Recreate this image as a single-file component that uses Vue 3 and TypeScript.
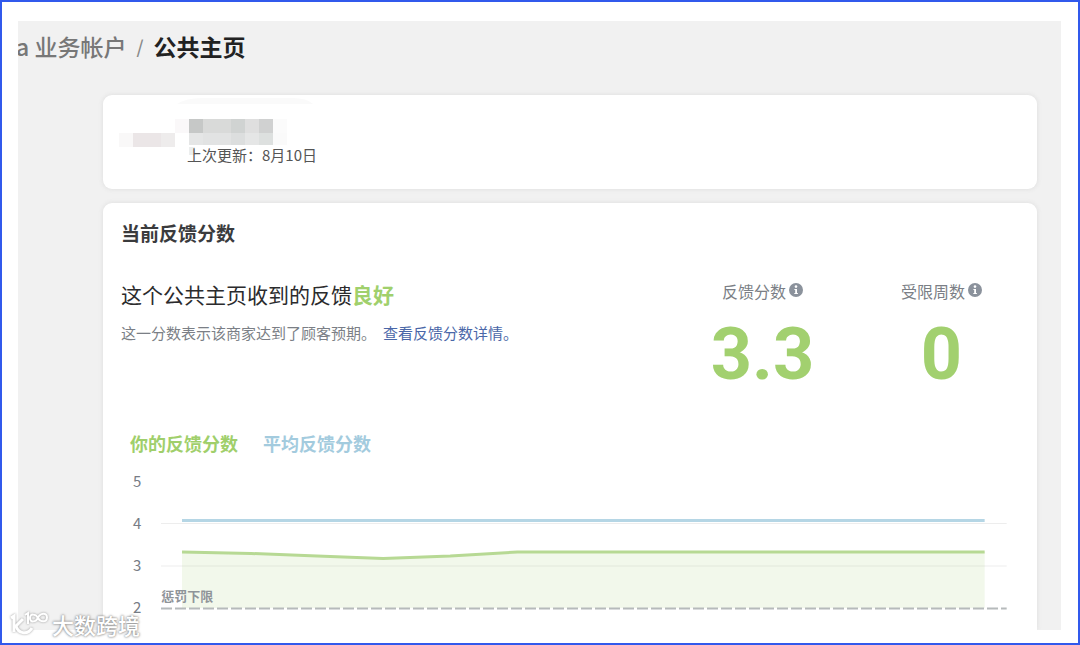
<script setup lang="ts">
interface Metric {
  id: string
  label: string
  value: string
}
interface Tile {
  x: number
  y: number
  w: number
  h: number
  fill: string
}

const metrics: Metric[] = [
  { id: 'score', label: '反馈分数', value: '3.3' },
  { id: 'weeks', label: '受限周数', value: '0' },
]

const axis: number[] = [5, 4, 3, 2]

const tiles: Tile[] = [
  { x: 0, y: 38, w: 14, h: 14, fill: '#f9f8f8' },
  { x: 14, y: 38, w: 28, h: 14, fill: '#ebe6e7' },
  { x: 42, y: 38, w: 14, h: 14, fill: '#eeecec' },
  { x: 56, y: 24, w: 14, h: 14, fill: '#faf8f9' },
  { x: 70, y: 24, w: 14, h: 14, fill: '#c6c8c7' },
  { x: 84, y: 24, w: 28, h: 14, fill: '#d9dad9' },
  { x: 112, y: 24, w: 14, h: 14, fill: '#d0d3d2' },
  { x: 126, y: 24, w: 14, h: 14, fill: '#dfdfdf' },
  { x: 140, y: 24, w: 14, h: 14, fill: '#d0d1d1' },
  { x: 154, y: 24, w: 14, h: 14, fill: '#fbfbfb' },
  { x: 70, y: 38, w: 14, h: 12, fill: '#e5e6e6' },
  { x: 84, y: 38, w: 28, h: 12, fill: '#e2e3e3' },
  { x: 112, y: 38, w: 14, h: 12, fill: '#dcdede' },
  { x: 126, y: 38, w: 14, h: 12, fill: '#e5e6e6' },
  { x: 140, y: 38, w: 14, h: 12, fill: '#dde0df' },
  { x: 154, y: 38, w: 14, h: 12, fill: '#fafafa' },
  { x: 70, y: 52, w: 6, h: 8, fill: '#eceeee' },
]
</script>

<template>
  <div class="frame">
    <main class="page">
      <nav class="crumbs">
        <a href="#" class="crumb">a 业务帐户</a>
        <span class="slash">/</span>
        <span class="current">公共主页</span>
      </nav>

      <section class="card profile">
        <svg class="mosaic" width="194" height="62" viewBox="0 0 194 62" aria-hidden="true">
          <path d="M58 9 Q66 3 84 3 H174 Q188 3 194 9 Z" fill="#fafafa" />
          <rect v-for="(t, i) in tiles" :key="i" :x="t.x" :y="t.y" :width="t.w" :height="t.h" :fill="t.fill" />
        </svg>
        <p class="updated">上次更新：8月10日</p>
      </section>

      <section class="card feedback">
        <h2 class="title">当前反馈分数</h2>
        <div class="summary">
          <div class="verdict">
            <p class="headline">这个公共主页收到的反馈<strong>良好</strong></p>
            <p class="note">
              <span>这一分数表示该商家达到了顾客预期。</span>
              <a href="#">查看反馈分数详情。</a>
            </p>
          </div>
          <div v-for="m in metrics" :key="m.id" class="metric">
            <div class="metric-label">
              <span>{{ m.label }}</span>
              <button type="button" class="info" :aria-label="m.label">
                <svg width="14" height="14" viewBox="0 0 14 14">
                  <circle cx="7" cy="7" r="7" fill="#8b929c" />
                  <circle cx="7" cy="3.6" r="1.3" fill="#fff" />
                  <path d="M5.4 6H8V10H8.9V11H5.3V10H6.2V7H5.4Z" fill="#fff" />
                </svg>
              </button>
            </div>
            <div class="metric-value">{{ m.value }}</div>
          </div>
        </div>

        <div class="legend">
          <span class="mine">你的反馈分数</span>
          <span class="average">平均反馈分数</span>
        </div>
        <div class="chart">
          <div class="axis">
            <span v-for="n in axis" :key="n">{{ n }}</span>
          </div>
          <div class="plot">
            <svg class="lines" viewBox="0 0 845 150" preserveAspectRatio="none">
              <path d="M0 63.5H845M0 106H845" class="grid" />
              <path
                d="M21 92L90 93.5L156 96L222 98.5L289 96L356 92H823V148H21Z"
                fill="#8bc34a"
                fill-opacity="0.11"
              />
              <path d="M0 148.5H845" class="limit" />
              <path d="M21 60.5H823" class="line blue" />
              <path d="M21 92L90 93.5L156 96L222 98.5L289 96L356 92H823" class="line green" />
            </svg>
            <span class="limit-label">惩罚下限</span>
          </div>
        </div>
      </section>
    </main>

    <div class="watermark">
      <svg width="40" height="28" viewBox="0 0 40 28" fill="none" stroke="#fff" aria-hidden="true">
        <path d="M2 8L5 6V22" stroke-width="3" />
        <path d="M14 9L7 16C9 23 18 26 23 18" stroke-width="3" />
        <path d="M16 5L19 3V14" stroke-width="2" />
        <path
          d="M29 8C27 4 21 3 21 8C21 13 27 12 29 8C31 3 38 2 38 7.500C38 13 31 12 29 8Z"
          stroke-width="2"
        />
      </svg>
      <span>大数跨境</span>
    </div>
  </div>
</template>

<style>
body {
  margin: 0;
}
</style>

<style scoped>
.frame {
  position: relative;
  box-sizing: border-box;
  min-height: 100vh;
  display: flex;
  flex-direction: column;
  padding: 19px 17px 13px 16px;
  border: 2px solid #3159ec;
  background: #fff;
  font-family: 'Noto Sans CJK SC', sans-serif;
}
p,
h2 {
  margin: 0;
}
a {
  text-decoration: none;
}
.page {
  flex: 1;
  display: flex;
  flex-direction: column;
  gap: 14px;
  padding: 8px 24px 0 85px;
  overflow: hidden;
  background: #f1f1f1;
}
.crumbs {
  display: flex;
  align-items: center;
  margin: 0 0 18px -87px;
  font-size: 23px;
  line-height: 34px;
  font-weight: 500;
}
.crumb {
  color: #777;
}
.slash {
  margin: 0 10px;
  font-size: 18px;
  color: #888;
}
.current {
  font-weight: 700;
  color: #222;
}
.card {
  border-radius: 9px;
  background: #fff;
  box-shadow: 0 0 5px #dcdcdc;
}
.profile {
  position: relative;
  padding: 49px 18px 23px 84px;
}
.mosaic {
  position: absolute;
  top: 0;
  left: 16px;
}
.updated {
  position: relative;
  font-size: 15px;
  line-height: 22px;
  color: #555;
}
.feedback {
  flex: 1;
  padding: 18px 6px 0 18px;
  border-radius: 9px 9px 0 0;
}
.title {
  font-size: 19px;
  line-height: 24px;
  font-weight: 700;
  color: #3a3b3d;
}
.summary {
  display: grid;
  grid-template-columns: 1fr 179px 179px;
  margin-top: 34px;
}
.headline {
  margin-top: 1px;
  font-size: 21px;
  line-height: 28px;
  color: #2b2b2d;
}
.headline strong {
  color: #a0d06c;
}
.note {
  display: flex;
  gap: 7px;
  margin-top: 15px;
  font-size: 15px;
  line-height: 20px;
  color: #7b7f86;
}
.note a {
  color: #4a67a8;
}
.metric {
  text-align: center;
}
.metric-label {
  display: flex;
  justify-content: center;
  gap: 3px;
  font-size: 16px;
  line-height: 24px;
  color: #7b7f86;
}
.info {
  height: 22px;
  padding: 0;
  border: 0;
  background: none;
  line-height: 0;
}
.metric-value {
  margin-top: 16px;
  font-family: Roboto, sans-serif;
  font-size: 72px;
  line-height: 72px;
  font-weight: 700;
  color: #a2d06f;
}
.legend {
  display: flex;
  gap: 25px;
  margin: 40px 0 5px 9px;
  font-size: 18px;
  line-height: 24px;
  font-weight: 700;
}
.mine {
  color: #a0cf6b;
}
.average {
  color: #a3cbde;
}
.chart {
  display: flex;
  gap: 20px;
  padding: 0 24px 0 12px;
}
.axis {
  display: flex;
  flex-direction: column;
  font-size: 15px;
  line-height: 42px;
  color: #777c85;
}
.plot {
  position: relative;
  flex: 1;
}
.lines {
  display: block;
  width: 100%;
  height: 150px;
}
.lines path {
  vector-effect: non-scaling-stroke;
}
.grid {
  stroke: #ededed;
  stroke-width: 1;
}
.limit {
  stroke: #b6babb;
  stroke-width: 2;
  stroke-dasharray: 11 3;
}
.line {
  fill: none;
  stroke-width: 3;
}
.blue {
  stroke: #b5d6e5;
}
.green {
  stroke: #b7d994;
}
.limit-label {
  position: absolute;
  left: 0;
  bottom: 22px;
  font-size: 13px;
  line-height: 20px;
  font-weight: 700;
  color: #8f9499;
}
.watermark {
  position: absolute;
  left: 7px;
  bottom: 5px;
  display: flex;
  align-items: center;
  gap: 3px;
  font-size: 22px;
  line-height: 26px;
  font-weight: 500;
  color: #fff;
  text-shadow: 0 0 2px #888, 0 0 3px #999;
}
.watermark svg {
  filter: drop-shadow(0 0 1px #999);
}
</style>
